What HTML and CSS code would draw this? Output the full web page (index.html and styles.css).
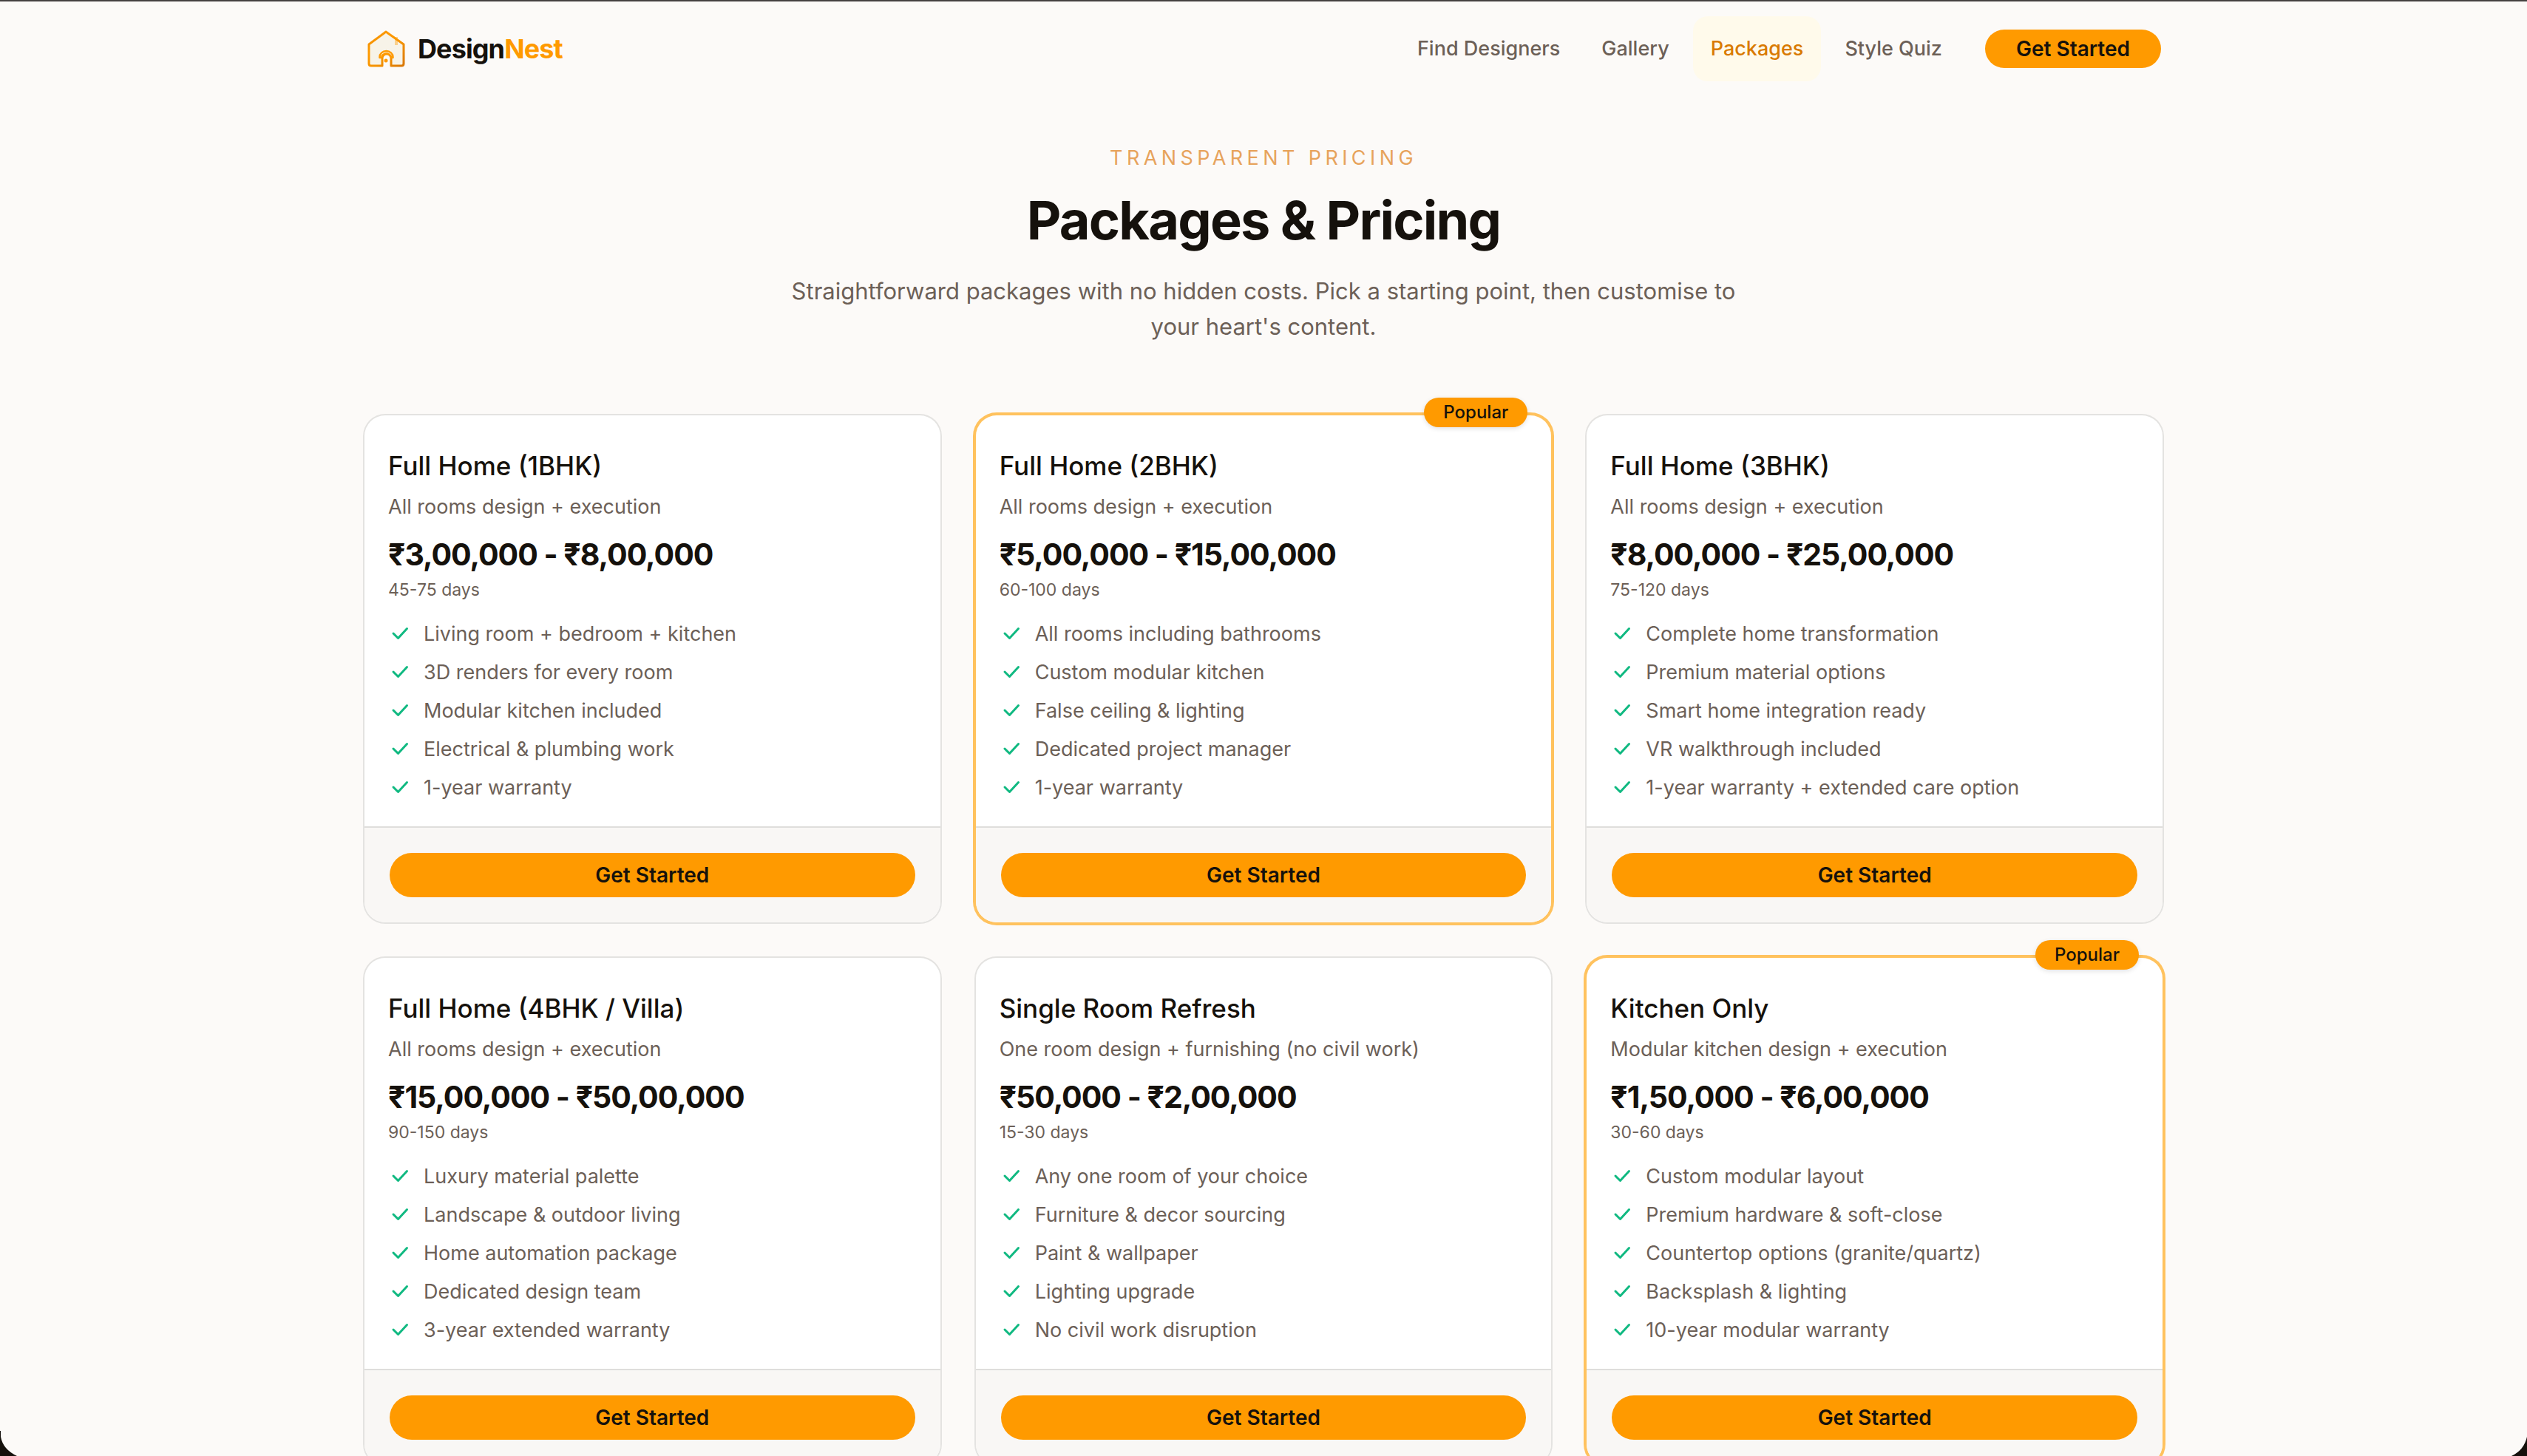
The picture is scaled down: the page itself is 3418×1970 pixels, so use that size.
FILE: index.html
```html
<!DOCTYPE html>
<html lang="en">
<head>
  <meta charset="UTF-8" />
  <meta name="viewport" content="width=device-width, initial-scale=1.0"/>
  <title>DesignNest - Packages &amp; Pricing</title>
  <link rel="stylesheet" href="styles.css">
</head>
<body>
  <svg class="sprite" aria-hidden="true">
    <symbol id="check" viewBox="0 0 32 32">
      <path d="M25.5 8.5 13.5 21.5 7 15" fill="none" stroke="currentColor" stroke-width="3" stroke-linecap="round" stroke-linejoin="round"/>
    </symbol>
  </svg>

  <header class="site-header">
    <div class="container header-row">
      <a href="#" class="brand">
        <svg class="brand-icon" viewBox="0 0 56 56" aria-hidden="true">
          <defs>
            <linearGradient id="roof" x1="0" y1="0" x2="1" y2="1">
              <stop offset="0" stop-color="#e88a00"/>
              <stop offset="0.3" stop-color="#ff9a00"/>
              <stop offset="0.6" stop-color="#f59300"/>
              <stop offset="1" stop-color="#d97706"/>
            </linearGradient>
          </defs>
          <path d="M6 22 29 5 53 22V48Q53 51 50 51H36V41A6 6 0 0 0 24 41V51H9Q6 51 6 48Z" fill="#f7f3e8" stroke="url(#roof)" stroke-width="3" stroke-linejoin="round"/>
          <path d="M43 12V23" stroke="#ff9a00" stroke-opacity="0.4" stroke-width="4"/>
          <path d="M20.500 40V39A9 8 0 0 1 38.500 39V40H36A6 5 0 0 0 23 40Z" fill="none" stroke="#ff9a00" stroke-width="2.500" stroke-linejoin="round"/>
          <circle cx="29" cy="44" r="2.500" fill="#ff9a00"/>
        </svg>
        <span class="brand-name">Design<span class="brand-accent">Nest</span></span>
      </a>
      <nav class="nav">
        <a href="#" class="nav-link">Find Designers</a>
        <a href="#" class="nav-link">Gallery</a>
        <a href="#" class="nav-link active">Packages</a>
        <a href="#" class="nav-link">Style Quiz</a>
        <button type="button" class="btn btn-small">Get Started</button>
      </nav>
    </div>
  </header>

  <main class="container">
    <section class="hero">
      <p class="eyebrow">Transparent Pricing</p>
      <h1>Packages &amp; Pricing</h1>
      <p class="lead">Straightforward packages with no hidden costs. Pick a starting point, then customise to your heart's content.</p>
    </section>

    <section class="packages">
      <article class="card">
        <div class="card-body">
          <h2>Full Home (1BHK)</h2>
          <p class="desc">All rooms design + execution</p>
          <p class="price">₹3,00,000 - ₹8,00,000</p>
          <p class="days">45-75 days</p>
          <ul class="features">
            <li><svg class="check"><use href="#check"/></svg>Living room + bedroom + kitchen</li>
            <li><svg class="check"><use href="#check"/></svg>3D renders for every room</li>
            <li><svg class="check"><use href="#check"/></svg>Modular kitchen included</li>
            <li><svg class="check"><use href="#check"/></svg>Electrical &amp; plumbing work</li>
            <li><svg class="check"><use href="#check"/></svg>1-year warranty</li>
          </ul>
        </div>
        <div class="card-footer">
          <button type="button" class="btn">Get Started</button>
        </div>
      </article>

      <article class="card popular">
        <span class="badge">Popular</span>
        <div class="card-body">
          <h2>Full Home (2BHK)</h2>
          <p class="desc">All rooms design + execution</p>
          <p class="price">₹5,00,000 - ₹15,00,000</p>
          <p class="days">60-100 days</p>
          <ul class="features">
            <li><svg class="check"><use href="#check"/></svg>All rooms including bathrooms</li>
            <li><svg class="check"><use href="#check"/></svg>Custom modular kitchen</li>
            <li><svg class="check"><use href="#check"/></svg>False ceiling &amp; lighting</li>
            <li><svg class="check"><use href="#check"/></svg>Dedicated project manager</li>
            <li><svg class="check"><use href="#check"/></svg>1-year warranty</li>
          </ul>
        </div>
        <div class="card-footer">
          <button type="button" class="btn">Get Started</button>
        </div>
      </article>

      <article class="card">
        <div class="card-body">
          <h2>Full Home (3BHK)</h2>
          <p class="desc">All rooms design + execution</p>
          <p class="price">₹8,00,000 - ₹25,00,000</p>
          <p class="days">75-120 days</p>
          <ul class="features">
            <li><svg class="check"><use href="#check"/></svg>Complete home transformation</li>
            <li><svg class="check"><use href="#check"/></svg>Premium material options</li>
            <li><svg class="check"><use href="#check"/></svg>Smart home integration ready</li>
            <li><svg class="check"><use href="#check"/></svg>VR walkthrough included</li>
            <li><svg class="check"><use href="#check"/></svg>1-year warranty + extended care option</li>
          </ul>
        </div>
        <div class="card-footer">
          <button type="button" class="btn">Get Started</button>
        </div>
      </article>

      <article class="card">
        <div class="card-body">
          <h2>Full Home (4BHK / Villa)</h2>
          <p class="desc">All rooms design + execution</p>
          <p class="price">₹15,00,000 - ₹50,00,000</p>
          <p class="days">90-150 days</p>
          <ul class="features">
            <li><svg class="check"><use href="#check"/></svg>Luxury material palette</li>
            <li><svg class="check"><use href="#check"/></svg>Landscape &amp; outdoor living</li>
            <li><svg class="check"><use href="#check"/></svg>Home automation package</li>
            <li><svg class="check"><use href="#check"/></svg>Dedicated design team</li>
            <li><svg class="check"><use href="#check"/></svg>3-year extended warranty</li>
          </ul>
        </div>
        <div class="card-footer">
          <button type="button" class="btn">Get Started</button>
        </div>
      </article>

      <article class="card">
        <div class="card-body">
          <h2>Single Room Refresh</h2>
          <p class="desc">One room design + furnishing (no civil work)</p>
          <p class="price">₹50,000 - ₹2,00,000</p>
          <p class="days">15-30 days</p>
          <ul class="features">
            <li><svg class="check"><use href="#check"/></svg>Any one room of your choice</li>
            <li><svg class="check"><use href="#check"/></svg>Furniture &amp; decor sourcing</li>
            <li><svg class="check"><use href="#check"/></svg>Paint &amp; wallpaper</li>
            <li><svg class="check"><use href="#check"/></svg>Lighting upgrade</li>
            <li><svg class="check"><use href="#check"/></svg>No civil work disruption</li>
          </ul>
        </div>
        <div class="card-footer">
          <button type="button" class="btn">Get Started</button>
        </div>
      </article>

      <article class="card popular">
        <span class="badge">Popular</span>
        <div class="card-body">
          <h2>Kitchen Only</h2>
          <p class="desc">Modular kitchen design + execution</p>
          <p class="price">₹1,50,000 - ₹6,00,000</p>
          <p class="days">30-60 days</p>
          <ul class="features">
            <li><svg class="check"><use href="#check"/></svg>Custom modular layout</li>
            <li><svg class="check"><use href="#check"/></svg>Premium hardware &amp; soft-close</li>
            <li><svg class="check"><use href="#check"/></svg>Countertop options (granite/quartz)</li>
            <li><svg class="check"><use href="#check"/></svg>Backsplash &amp; lighting</li>
            <li><svg class="check"><use href="#check"/></svg>10-year modular warranty</li>
          </ul>
        </div>
        <div class="card-footer">
          <button type="button" class="btn">Get Started</button>
        </div>
      </article>
    </section>
  </main>

  <svg class="corner corner-left" viewBox="0 0 24 56" aria-hidden="true"><path d="M0 22H1V30Q4 47 23 56H0Z"/></svg>
  <svg class="corner corner-right" viewBox="0 0 24 56" aria-hidden="true"><path d="M24 30Q20 48 3 56H24Z"/></svg>
</body>
</html>
```
FILE: styles.css
```css
:root {
  --bg: #fcfaf8;
  --text: #15110c;
  --muted: #6c6057;
  --accent: #ff9a00;
  --border: #e4e3e1;
}

* {
  box-sizing: border-box;
}

body {
  margin: 0;
  font-family: Inter, "Liberation Sans", sans-serif;
  font-size: 27px;
  line-height: 40px;
  background: var(--bg);
  color: var(--text);
  border-top: 2px solid #444140;
}

h1, h2, p, ul {
  margin: 0;
  padding: 0;
}

a {
  color: inherit;
  text-decoration: none;
}

.sprite {
  display: none;
}

.container {
  max-width: 2560px;
  margin: 0 auto;
  padding: 0 64px;
}

.header-row {
  display: flex;
  align-items: center;
  justify-content: space-between;
  height: 128px;
}

.brand {
  display: flex;
  align-items: center;
  gap: 16px;
}

.brand-icon {
  width: 56px;
  height: 56px;
}

.brand-name {
  font-size: 36px;
  font-weight: 700;
  letter-spacing: -0.025em;
}

.brand-accent {
  color: var(--accent);
}

.nav {
  display: flex;
  align-items: center;
  gap: 8px;
}

.nav-link {
  padding: 24px;
  border-radius: 20px;
  font-weight: 500;
  color: var(--muted);
}

.nav-link.active {
  background: #fffaeb;
  color: #d97a00;
}

.btn {
  display: block;
  width: 100%;
  height: 64px;
  padding: 0 20px;
  border: 2px solid transparent;
  border-radius: 32px;
  background: var(--accent);
  background-clip: padding-box;
  color: var(--text);
  font-family: inherit;
  font-size: 28px;
  font-weight: 600;
  cursor: pointer;
}

.btn-small {
  width: auto;
  height: 56px;
  padding: 0 42px;
  margin-left: 24px;
}

.hero {
  display: flex;
  flex-direction: column;
  align-items: center;
  padding: 64px 0 96px;
  text-align: center;
}

.eyebrow {
  color: #e7a35c;
  letter-spacing: 0.2em;
  text-transform: uppercase;
}

h1 {
  margin-top: 24px;
  font-size: 72px;
  line-height: 80px;
  font-weight: 700;
  letter-spacing: -0.025em;
}

.lead {
  max-width: 1312px;
  margin-top: 32px;
  font-size: 31px;
  line-height: 48px;
  color: var(--muted);
}

.packages {
  display: grid;
  grid-template-columns: repeat(3, 1fr);
  gap: 48px;
  padding-bottom: 128px;
}

.card {
  position: relative;
  border-radius: 28px;
  background: #fff;
  box-shadow: 0 0 0 2px var(--border);
}

.card.popular {
  box-shadow: 0 0 0 4px #ffc25e;
}

.badge {
  position: absolute;
  top: -24px;
  right: 32px;
  padding: 0 26px;
  border-radius: 20px;
  background: var(--accent);
  box-shadow: 0 2px 6px rgba(0, 0, 0, 0.12);
  font-size: 24px;
  font-weight: 500;
}

.card-body {
  padding: 44px 32px 32px;
}

.card h2 {
  font-size: 35px;
  line-height: 48px;
  font-weight: 500;
}

.desc {
  margin-top: 12px;
  color: var(--muted);
}

.price {
  margin-top: 20px;
  font-size: 41px;
  line-height: 48px;
  font-weight: 700;
  letter-spacing: -0.025em;
}

.days {
  margin-top: 8px;
  font-size: 23px;
  line-height: 32px;
  color: var(--muted);
}

.features {
  display: flex;
  flex-direction: column;
  gap: 12px;
  margin-top: 24px;
  list-style: none;
  color: var(--muted);
}

.features li {
  display: flex;
  align-items: center;
  gap: 16px;
}

.check {
  flex: none;
  width: 32px;
  height: 32px;
  color: #10b981;
}

.card-footer {
  padding: 32px;
  border-top: 2px solid #dfdedc;
  border-radius: 0 0 28px 28px;
  background: #f9f7f5;
}

/* rounded window corners */
.corner {
  position: fixed;
  bottom: 0;
  width: 24px;
  height: 56px;
  fill: #15110c;
}

.corner-left {
  left: 0;
}

.corner-right {
  right: 0;
}
```
